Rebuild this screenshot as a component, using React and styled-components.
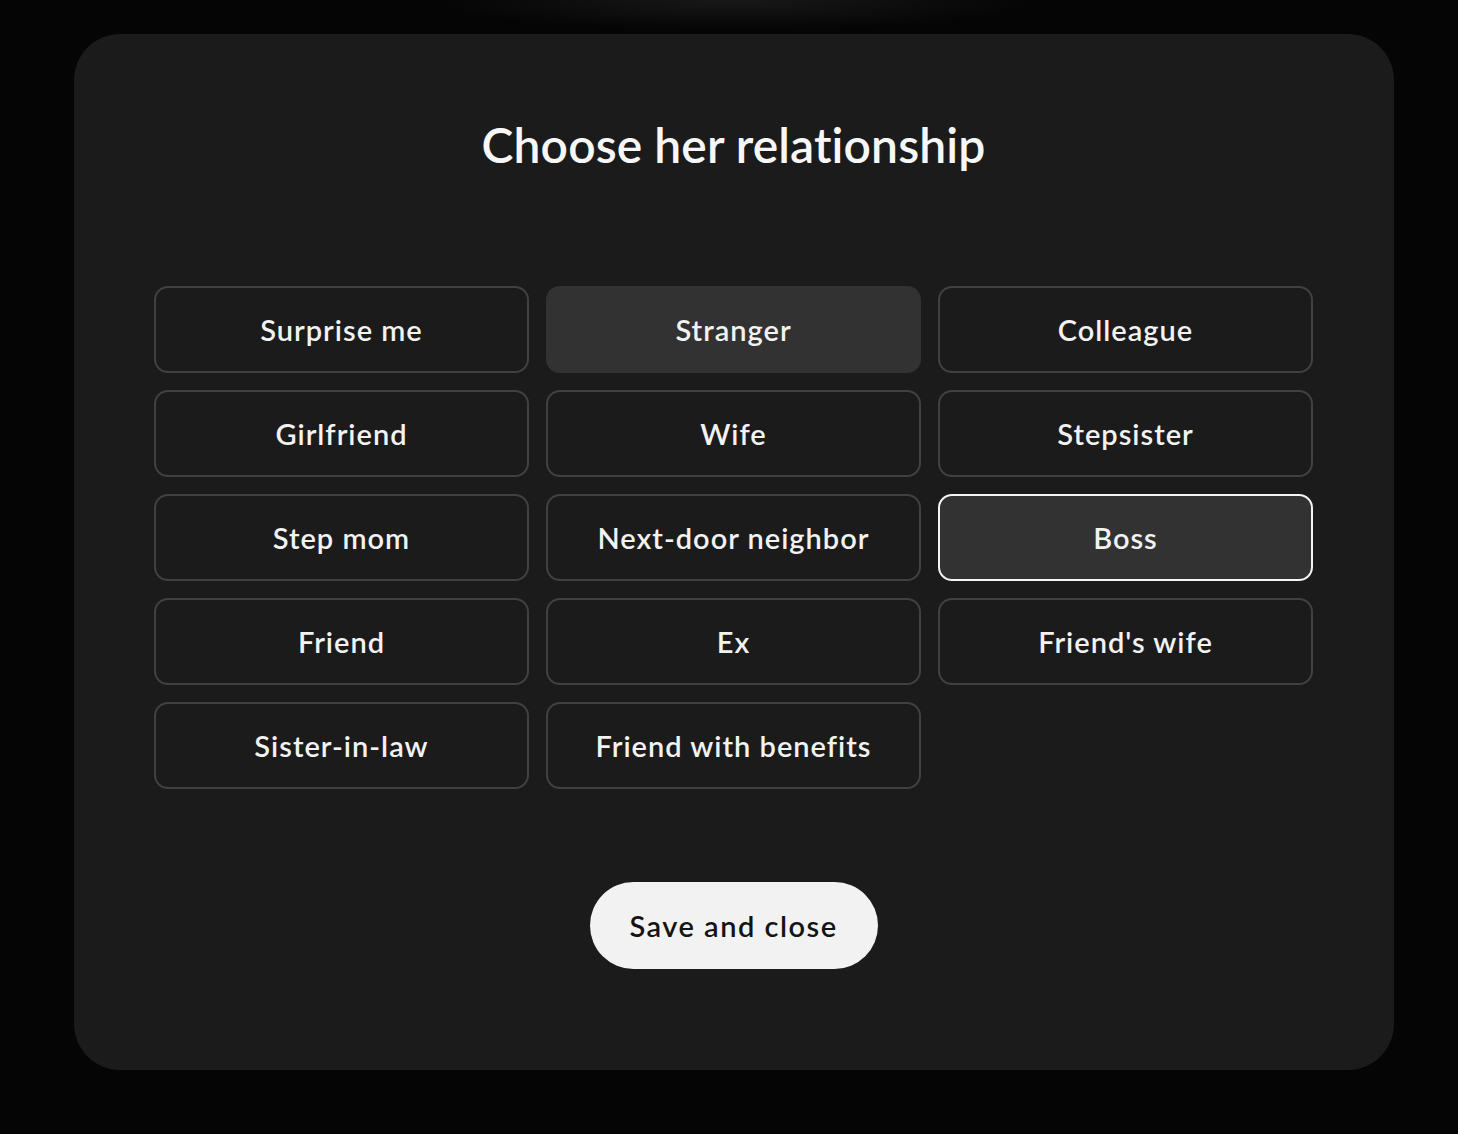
import React, { useState } from "react";
import styled, { createGlobalStyle } from "styled-components";

const GlobalStyle = createGlobalStyle`
  html, body {
    margin: 0;
    padding: 0;
  }
  body {
    min-height: 1134px;
    background:
      radial-gradient(ellipse 300px 30px at 734px 0, rgba(26, 26, 26, 0.9), rgba(5, 5, 5, 0) 100%),
      #050505;
    font-family: "Lato", "Noto Sans", sans-serif;
    color: #f2f2f2;
  }
`;

const Page = styled.div`
  padding: 34px 0 64px 74px;
`;

const Modal = styled.section`
  width: 1320px;
  box-sizing: border-box;
  padding: 82px 81px 101px 80px;
  background: #1b1b1b;
  border-radius: 46px;
  display: flex;
  flex-direction: column;
  align-items: center;
`;

const Title = styled.h2`
  margin: 0;
  font-size: 48px;
  line-height: 58px;
  font-weight: 600;
  letter-spacing: 0.1px;
  color: #f7f7f7;
`;

const Grid = styled.div`
  margin-top: 112px;
  width: 100%;
  display: grid;
  grid-template-columns: repeat(3, 1fr);
  grid-auto-rows: 87px;
  gap: 17px;
`;

const Option = styled.button`
  box-sizing: border-box;
  border-radius: 14px;
  border: 2px solid ${(p) => (p.$selected ? "#f4f4f4" : p.$hover ? "transparent" : "#414141")};
  background: ${(p) => (p.$selected || p.$hover ? "#323232" : "#1b1b1b")};
  color: #f2f2f2;
  font-family: inherit;
  font-size: 29px;
  font-weight: 600;
  letter-spacing: 1px;
  cursor: pointer;
  display: flex;
  align-items: center;
  justify-content: center;
  padding: 0 16px;
`;

const SaveButton = styled.button`
  margin-top: 93px;
  width: 288px;
  height: 87px;
  border: none;
  border-radius: 44px;
  background: #f2f2f2;
  color: #141414;
  font-family: inherit;
  font-size: 29px;
  font-weight: 600;
  letter-spacing: 1.5px;
  cursor: pointer;
`;

const options = [
  "Surprise me",
  "Stranger",
  "Colleague",
  "Girlfriend",
  "Wife",
  "Stepsister",
  "Step mom",
  "Next-door neighbor",
  "Boss",
  "Friend",
  "Ex",
  "Friend's wife",
  "Sister-in-law",
  "Friend with benefits",
];

export default function App() {
  const [selected, setSelected] = useState("Boss");

  return (
    <>
      <GlobalStyle />
      <Page>
        <Modal>
          <Title>Choose her relationship</Title>
          <Grid>
            {options.map((o) => (
              <Option
                key={o}
                $selected={selected === o}
                $hover={o === "Stranger" && selected !== o}
                onClick={() => setSelected(o)}
              >
                {o}
              </Option>
            ))}
          </Grid>
          <SaveButton>Save and close</SaveButton>
        </Modal>
      </Page>
    </>
  );
}
